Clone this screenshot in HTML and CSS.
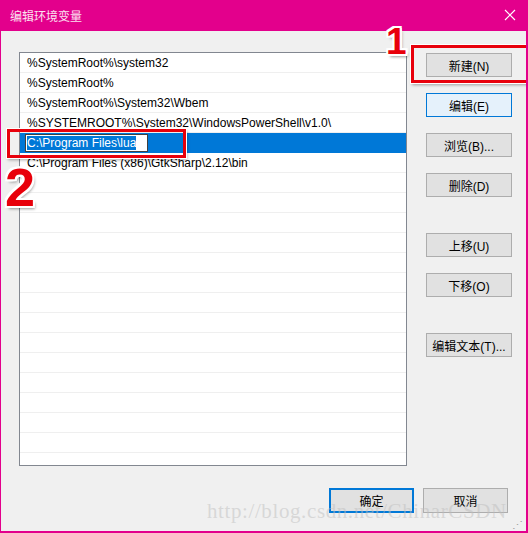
FILE: index.html
```html
<!DOCTYPE html>
<html lang="zh-CN">

<head>
  <meta charset="UTF-8">
  <meta name="viewport" content="width=device-width, initial-scale=1.0">
  <title>编辑环境变量</title>
  <link rel="stylesheet" href="styles.css">
</head>

<body>
  <div class="window">
    <!-- 标题栏 -->
    <div class="titlebar">
      <span class="title">编辑环境变量</span>
      <svg class="close" width="12" height="12" viewBox="0 0 12 12">
        <path d="M1 1 L11 11 M11 1 L1 11" stroke="#fff" stroke-width="1.2" fill="none" />
      </svg>
    </div>

    <div class="client">
      <div class="main">
        <!-- 路径列表 -->
        <div class="list">
          <div class="row">%SystemRoot%\system32</div>
          <div class="row">%SystemRoot%</div>
          <div class="row">%SystemRoot%\System32\Wbem</div>
          <div class="row">%SYSTEMROOT%\System32\WindowsPowerShell\v1.0\</div>
          <div class="row selected">
            <span class="edit"><span class="sel">C:\Program Files\lua</span></span>
          </div>
          <div class="row">C:\Program Files (x86)\GtkSharp\2.12\bin</div>
          <div class="row"></div>
          <div class="row"></div>
          <div class="row"></div>
          <div class="row"></div>
          <div class="row"></div>
          <div class="row"></div>
          <div class="row"></div>
          <div class="row"></div>
          <div class="row"></div>
          <div class="row"></div>
          <div class="row"></div>
          <div class="row"></div>
          <div class="row"></div>
          <div class="row"></div>
          <div class="row"></div>
        </div>

        <!-- 右侧按钮 -->
        <div class="side">
          <button class="btn">新建(N)</button>
          <button class="btn hover">编辑(E)</button>
          <button class="btn">浏览(B)...</button>
          <button class="btn">删除(D)</button>
          <button class="btn gap">上移(U)</button>
          <button class="btn">下移(O)</button>
          <button class="btn gap">编辑文本(T)...</button>
        </div>
      </div>

      <div class="footer">
        <button class="btn wide default">确定</button>
        <button class="btn wide">取消</button>
      </div>
    </div>

    <div class="watermark">http://blog.csdn.net/ChinarCSDN</div>
    <div class="grip">⋰</div>

    <!-- 标注 -->
    <div class="mark mark-1"></div>
    <div class="mark mark-2"></div>
    <div class="num num-1">1</div>
    <div class="num num-2">2</div>
  </div>
</body>

</html>
```

FILE: styles.css
```css
/* 全局样式 */
body {
  margin: 0;
  padding: 0;
  font-family: "Liberation Sans", "Noto Sans CJK SC", sans-serif;
  font-size: 12px;
  color: #000;
  background: #fff;
}

/* 窗口 */
.window {
  position: relative;
  width: 528px;
  height: 533px;
  box-sizing: border-box;
  border: 1px solid #e3008c;
  border-top: none;
  border-right-width: 2px;
  border-bottom-width: 2px;
  background-color: #f0f0f0;
  display: flex;
  flex-direction: column;
  overflow: hidden;
}

.titlebar {
  height: 31px;
  margin: 0 -2px 0 -1px;
  background-color: #e3008c;
  color: #fff;
  display: flex;
  align-items: center;
  justify-content: space-between;
  padding: 0 12px 0 10px;
  flex-shrink: 0;
}

.title {
  font-family: "Noto Sans CJK SC", sans-serif;
  font-size: 12px;
  color: #fbe0f0;
}

.close {
  margin-top: -2px;
}

.client {
  flex: 1;
  padding: 21px 0 0 18px;
  display: flex;
  flex-direction: column;
}

.main {
  display: flex;
  gap: 19px;
}

/* 列表 */
.list {
  width: 388px;
  height: 414px;
  box-sizing: border-box;
  border: 1px solid #828790;
  background-color: #fff;
  overflow: hidden;
}

.row {
  height: 20px;
  box-sizing: border-box;
  border-bottom: 1px solid #efefef;
  padding-left: 7px;
  line-height: 20px;
  white-space: nowrap;
}

.row.selected {
  background-color: #0078d7;
  padding-left: 5px;
  border-bottom-color: #0078d7;
  display: flex;
  align-items: center;
}

.edit {
  display: inline-block;
  width: 123px;
  height: 18px;
  box-sizing: border-box;
  border: 1px solid #404040;
  background-color: #fff;
  padding-left: 1px;
  line-height: 16px;
}

.sel {
  background-color: #0078d7;
  color: #fff;
}

/* 按钮 */
.side {
  display: flex;
  flex-direction: column;
  gap: 16px;
  padding-top: 1px;
}

.btn {
  width: 86px;
  height: 24px;
  box-sizing: border-box;
  border: 1px solid #adadad;
  background-color: #e1e1e1;
  font-family: "Liberation Sans", "Noto Sans CJK SC", sans-serif;
  font-size: 12px;
  color: #000;
  padding: 0;
}

.btn.hover {
  background-color: #e5f1fb;
  border-color: #0078d7;
}

.btn.gap {
  margin-top: 20px;
}

.footer {
  display: flex;
  justify-content: flex-end;
  gap: 9px;
  margin-top: 22px;
  padding-right: 18px;
}

.btn.wide {
  width: 85px;
  height: 25px;
}

.btn.default {
  border: 2px solid #0078d7;
}

/* 水印 */
.watermark {
  position: absolute;
  left: 206px;
  top: 499px;
  font-family: "Liberation Serif", serif;
  font-size: 21px;
  letter-spacing: 0.6px;
  color: rgba(190, 190, 190, 0.5);
  white-space: nowrap;
  pointer-events: none;
}

.grip {
  position: absolute;
  right: 3px;
  bottom: 0;
  font-size: 11px;
  color: #a0a0a0;
  line-height: 11px;
}

/* 红色标注 */
.mark {
  position: absolute;
  border: 3px solid #e8000b;
  box-shadow: 0 0 0 1px #fff, 1px 2px 3px rgba(0, 0, 0, 0.35);
}

.mark-1 {
  left: 410px;
  top: 45px;
  width: 120px;
  height: 32px;
}

.mark-2 {
  left: 6px;
  top: 129px;
  width: 173px;
  height: 23px;
}

.num {
  position: absolute;
  font-family: "Liberation Sans", sans-serif;
  font-weight: bold;
  color: #e8000b;
  text-shadow: -2px -2px 0 #fff, 2px -2px 0 #fff, -2px 2px 0 #fff, 2px 2px 0 #fff,
    0 -2px 0 #fff, 0 2px 0 #fff, -2px 0 0 #fff, 2px 0 0 #fff, 2px 3px 3px rgba(0, 0, 0, 0.4);
}

.num-1 {
  left: 385px;
  top: 21px;
  font-size: 37px;
}

.num-2 {
  left: 4px;
  top: 160px;
  font-size: 54px;
  line-height: 54px;
}
```
